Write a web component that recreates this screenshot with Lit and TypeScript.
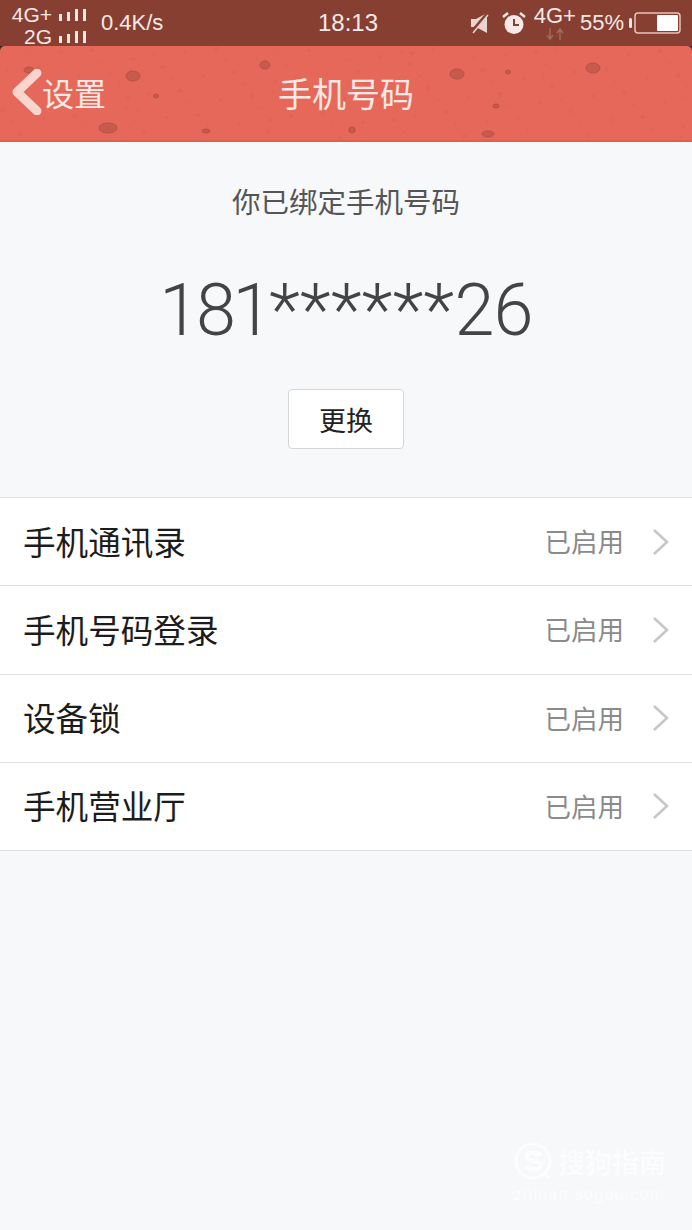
import { LitElement, html, css, svg } from 'lit';
import { customElement } from 'lit/decorators.js';

const SPOTS = [
  [29, 70, 5, 3], [133, 76, 7, 5], [156, 96, 2.5, 2], [108, 128, 9, 5], [206, 131, 4, 2],
  [265, 65, 5, 4], [457, 74, 7, 5], [508, 72, 2.5, 2], [593, 68, 7, 5], [496, 106, 3, 2],
  [352, 130, 3, 3], [488, 134, 6, 3],
];

// faint grain across the bar, fixed seed so every shot is the same
const GRAIN = Array.from({ length: 170 }, (_, i) => [
  (i * 137.5) % 692,
  48 + ((i * 61.8) % 90),
  0.7 + (i % 4) * 0.5,
]);

const ROWS = ['手机通讯录', '手机号码登录', '设备锁', '手机营业厅'];

const bars = html`<svg class="bars" width="27" height="12" viewBox="0 0 27 12">
  <rect x="0" y="5" width="3" height="7" /><rect x="8" y="3" width="3" height="9" />
  <rect x="16" y="0" width="3" height="12" /><rect x="24" y="0" width="3" height="12" />
</svg>`;

@customElement('app-root')
export class AppRoot extends LitElement {
  static styles = css`
    :host {
      display: block;
      position: relative;
      height: 1230px;
      overflow: hidden;
      background: #f7f8fa;
      font-family: 'Noto Sans CJK SC', 'Liberation Sans', sans-serif;
    }
    .top { background: #4a241c; }
    .status {
      height: 46px;
      background: #873f31;
      color: #f6e9e6;
      display: flex;
      align-items: center;
      font-family: 'Liberation Sans', sans-serif;
      font-size: 22px;
    }
    .nets {
      width: 75px;
      margin-left: 11px;
      padding-top: 5px;
      font-size: 21px;
      line-height: 22px;
      display: flex;
      flex-direction: column;
      align-items: flex-end;
    }
    .net {
      display: flex;
      align-items: center;
      gap: 7px;
      height: 22px;
    }
    .bars { fill: #f6e9e6; }
    .speed { margin-left: 15px; width: 217px; }
    .time { font-size: 24px; width: 128px; }
    .right {
      display: flex;
      align-items: center;
      flex: 1;
      justify-content: flex-end;
      padding-right: 11px;
    }
    .lte {
      position: relative;
      font-size: 22px;
      margin: -14px 4px 0 8px;
    }
    .arrows {
      position: absolute;
      left: 12px;
      top: 25px;
    }
    .pct { font-size: 22px; }
    .head {
      position: relative;
      height: 96px;
      background: #e6685a;
      border-radius: 5px 5px 0 0;
      border-bottom: 2px solid #dc5f51;
      box-sizing: border-box;
      color: #fbe9e5;
      display: flex;
      align-items: center;
      justify-content: center;
    }
    .texture {
      position: absolute;
      left: 0;
      top: 0;
    }
    .back {
      position: absolute;
      left: 12px;
      top: 23px;
      display: flex;
      align-items: center;
      font-size: 32px;
      line-height: 46px;
    }
    .title {
      position: relative;
      font-size: 34px;
      line-height: 46px;
    }
    .bound {
      display: flex;
      flex-direction: column;
      align-items: center;
      height: 355px;
      box-sizing: border-box;
      padding-top: 37px;
    }
    .hint {
      font-size: 28.5px;
      line-height: 44px;
      color: #555;
    }
    .number {
      margin-top: 46px;
      font-family: Roboto, 'Liberation Sans', sans-serif;
      font-weight: 300;
      font-size: 72px;
      letter-spacing: -0.8px;
      line-height: 84px;
      color: #444;
    }
    .digits { letter-spacing: -3.3px; }
    .stars { letter-spacing: 0.3px; }
    .change {
      margin-top: 36px;
      width: 116px;
      height: 60px;
      box-sizing: border-box;
      border: 1px solid #d5d6d9;
      border-radius: 4px;
      background: #fff;
      color: #222;
      font-size: 27px;
      display: flex;
      align-items: center;
      justify-content: center;
    }
    .list {
      background: #fff;
      border-top: 1px solid #dfdfe1;
    }
    .row {
      height: 88.25px;
      box-sizing: border-box;
      border-bottom: 1px solid #dfdfe1;
      display: flex;
      align-items: center;
      padding: 0 22px 0 23px;
    }
    .name {
      flex: 1;
      font-size: 32.6px;
      line-height: 44px;
      margin-bottom: 2px;
      color: #1c1c1c;
    }
    .state {
      font-size: 26.5px;
      line-height: 40px;
      margin-bottom: 1px;
      color: #8b8b8b;
      margin-right: 28px;
    }
    .mark {
      position: absolute;
      left: 514px;
      top: 1142px;
      color: #fff;
      display: grid;
      grid-template-columns: 40px auto;
      column-gap: 4px;
      align-items: center;
      opacity: 0.75;
    }
    .mark-zh { font-size: 27px; line-height: 40px; font-weight: 500; }
    .mark-url {
      grid-column: 1 / 3;
      font-family: 'Liberation Sans', sans-serif;
      font-size: 16px;
      line-height: 20px;
      letter-spacing: 1.3px;
      margin-top: 3px;
    }
  `;

  render() {
    return html`
      <div class="top">
        <div class="status">
          <div class="nets">
            <div class="net">4G+ ${bars}</div>
            <div class="net">2G ${bars}</div>
          </div>
          <div class="speed">0.4K/s</div>
          <div class="time">18:13</div>
          <div class="right">
            <svg width="20" height="22" viewBox="0 0 20 22">
              <path d="M2 7h5l11-6v20L7 15H2z" fill="#e9d5d0" />
              <path d="M1 22L19 1" stroke="#873f31" stroke-width="3.5" />
              <path d="M4 21L19 3" stroke="#e9d5d0" stroke-width="1.5" />
            </svg>
            <svg style="margin-left:13px" width="24" height="24" viewBox="0 0 24 24">
              <circle cx="12" cy="13.5" r="9.5" fill="#f6e9e6" />
              <path d="M12 8v6h5" fill="none" stroke="#873f31" stroke-width="2" />
              <path d="M1 6l5-4M23 6l-5-4" stroke="#f6e9e6" stroke-width="2.5" />
            </svg>
            <div class="lte">4G+
              <svg class="arrows" width="18" height="12" viewBox="0 0 18 12">
                <path d="M4 0v10M1 7l3 4 3-4M14 12V2M11 5l3-4 3 4" fill="none" stroke="#a06a5d" stroke-width="1.5" />
              </svg>
            </div>
            <span class="pct">55%</span>
            <svg style="margin-left:5px" width="52" height="22" viewBox="0 0 52 22">
              <rect x="0" y="6" width="3" height="10" rx="1.5" fill="#f6e9e6" />
              <rect x="6" y="1" width="45" height="20" rx="3" fill="none" stroke="#e6c4bb" stroke-width="1.5" />
              <rect x="28" y="3" width="21" height="16" rx="1" fill="#fff" />
            </svg>
          </div>
        </div>
        <div class="head">
          <svg class="texture" width="692" height="94" viewBox="0 46 692 94">
            ${GRAIN.map(([cx, cy, r]) => svg`<circle cx=${cx} cy=${cy} r=${r} fill="#c9574a" opacity="0.2" />`)}
            ${SPOTS.map(([cx, cy, rx, ry]) => svg`<ellipse cx=${cx} cy=${cy} rx=${rx} ry=${ry} fill="#c65a4d" stroke="#b95044" stroke-width="1" />`)}
          </svg>
          <div class="back">
            <svg width="30" height="46" viewBox="0 0 30 46">
              <path d="M25 4L5 23l20 19" fill="none" stroke="#f9d5cd" stroke-width="9" stroke-linecap="round" stroke-linejoin="round" />
            </svg>
            设置
          </div>
          <div class="title">手机号码</div>
        </div>
      </div>
      <div class="bound">
        <div class="hint">你已绑定手机号码</div>
        <div class="number"><span class="digits">181</span><span class="stars">******</span>26</div>
        <div class="change">更换</div>
      </div>
      <div class="list">
        ${ROWS.map(name => html`
          <div class="row">
            <span class="name">${name}</span>
            <span class="state">已启用</span>
            <svg width="18" height="28" viewBox="0 0 18 28">
              <path d="M2 2l13 12L2 26" fill="none" stroke="#c6c6c8" stroke-width="2.5" />
            </svg>
          </div>
        `)}
      </div>
      <div class="mark">
        <svg width="40" height="40" viewBox="0 0 40 40">
          <circle cx="19" cy="19" r="17" fill="none" stroke="#fff" stroke-width="3" />
          <path d="M27 13c-5-3-14-3-14 2s14 3 14 8-9 5-15 2" fill="none" stroke="#fff" stroke-width="4" />
          <path d="M30 31l5 5" stroke="#fff" stroke-width="3" />
        </svg>
        <span class="mark-zh">搜狗指南</span>
        <span class="mark-url">zhinan.sogou.com</span>
      </div>
    `;
  }
}
